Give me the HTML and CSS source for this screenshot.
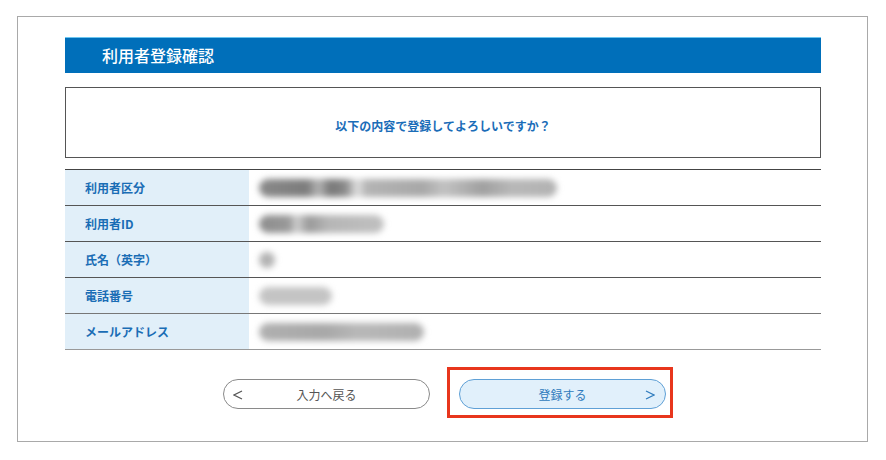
FILE: index.html
```html
<!DOCTYPE html>
<html lang="ja">
<head>
<meta charset="utf-8">
<title>利用者登録確認</title>
<link rel="stylesheet" href="styles.css">
</head>
<body>
<div class="frame">
  <h1 class="title">利用者登録確認</h1>
  <div class="message">以下の内容で登録してよろしいですか？</div>
  <div class="table">
    <div class="row">
      <div class="label">利用者区分</div>
      <div class="value"><span class="blob b1"></span></div>
    </div>
    <div class="row">
      <div class="label">利用者ID</div>
      <div class="value"><span class="blob b2"></span></div>
    </div>
    <div class="row">
      <div class="label">氏名（英字）</div>
      <div class="value"><span class="blob b3"></span></div>
    </div>
    <div class="row">
      <div class="label">電話番号</div>
      <div class="value"><span class="blob b4"></span></div>
    </div>
    <div class="row">
      <div class="label">メールアドレス</div>
      <div class="value"><span class="blob b5"></span></div>
    </div>
  </div>
  <div class="actions">
    <button class="btn btn-back">
      <svg class="arrow arrow-left" viewBox="0 0 10 10" width="10" height="10"><polyline points="9,1 1,5 9,9" fill="none" stroke="currentColor" stroke-width="1.2"/></svg>
      <span>入力へ戻る</span>
    </button>
    <div class="highlight-wrap">
      <button class="btn btn-submit">
        <span>登録する</span>
        <svg class="arrow arrow-right" viewBox="0 0 10 10" width="10" height="10"><polyline points="1,1 9,5 1,9" fill="none" stroke="currentColor" stroke-width="1.2"/></svg>
      </button>
      <span class="highlight"></span>
    </div>
  </div>
</div>
</body>
</html>
```

FILE: styles.css
```css
* { box-sizing: border-box; }
html, body { margin: 0; padding: 0; background: #fff; }
body {
  font-family: "Noto Sans CJK JP", "Noto Sans", sans-serif;
  width: 886px;
  height: 460px;
}
.frame {
  margin: 16px 0 0 17px;
  width: 851px;
  height: 426px;
  border: 1px solid #a9a9a9;
  padding: 20px 46px 0 47px;
}
.title {
  margin: 0;
  height: 36px;
  background: #006fba;
  border-top: 1px solid #6cc6f0;
  color: #fff;
  font-size: 16px;
  font-weight: 500;
  line-height: 34px;
  padding-left: 37px;
}
.message {
  margin-top: 14px;
  height: 71px;
  border: 1px solid #555;
  display: flex;
  align-items: center;
  justify-content: center;
  color: #1b6db8;
  font-size: 12px;
  font-weight: 700;
  padding-top: 6px;
}
.table {
  margin-top: 11px;
  border-top: 1px solid #444;
}
.row {
  display: flex;
  height: 36px;
  border-bottom: 1px solid #555;
}
.row:nth-child(4) { border-bottom-color: #777; }
.row:last-child { border-bottom-color: #999; }
.label {
  width: 184px;
  background: #e1eff9;
  color: #1a6db5;
  font-size: 12px;
  font-weight: 700;
  display: flex;
  align-items: center;
  padding-left: 20px;
}
.value {
  flex: 1;
  display: flex;
  align-items: center;
  padding-left: 10px;
}
.blob {
  display: block;
  height: 18px;
  border-radius: 9px;
  filter: blur(3px);
}
.b1 {
  width: 298px;
  background: linear-gradient(90deg, #8a8a8a 0, #7c7c7c 16%, #b5b5b5 20%, #777 24%, #8a8a8a 29%, #e2e2e2 33%, #b4b4b4 36%, #a8a8a8 55%, #c2c2c2 62%, #a0a0a0 75%, #b8b8b8 85%, #b2b2b2 100%);
}
.b2 {
  width: 125px;
  background: linear-gradient(90deg, #8d8d8d 0, #999 24%, #d0d0d0 30%, #999 40%, #b6b6b6 55%, #c0c0c0 100%);
}
.b3 {
  width: 16px;
  height: 16px;
  border-radius: 50%;
  background: #b3b3b3;
}
.b4 {
  width: 73px;
  background: #c4c4c4;
}
.b5 {
  width: 165px;
  background: linear-gradient(90deg, #b0b0b0 0, #a8a8a8 40%, #b8b8b8 60%, #b0b0b0 100%);
}
.actions {
  display: flex;
  justify-content: center;
  gap: 29px;
  margin-top: 29px;
  padding-left: 3px;
}
.btn {
  position: relative;
  width: 207px;
  height: 30px;
  border-radius: 15px;
  font-family: inherit;
  font-size: 12px;
  display: flex;
  align-items: center;
  justify-content: center;
  padding: 0;
  cursor: pointer;
}
.btn-back {
  background: #fff;
  border: 1px solid #8a8a8a;
  color: #555;
}
.btn-submit {
  background: #e1f0fb;
  border: 1px solid #5fa0d6;
  color: #2f7bbd;
}
.arrow {
  position: absolute;
  top: 10px;
}
.arrow-left { left: 9px; color: #555; }
.arrow-right { right: 10px; color: #2f7bbd; }
.highlight-wrap {
  position: relative;
}
.highlight {
  position: absolute;
  left: -12px;
  top: -12px;
  right: -7px;
  bottom: -9px;
  border: 3px solid #e8361d;
  pointer-events: none;
}
```
